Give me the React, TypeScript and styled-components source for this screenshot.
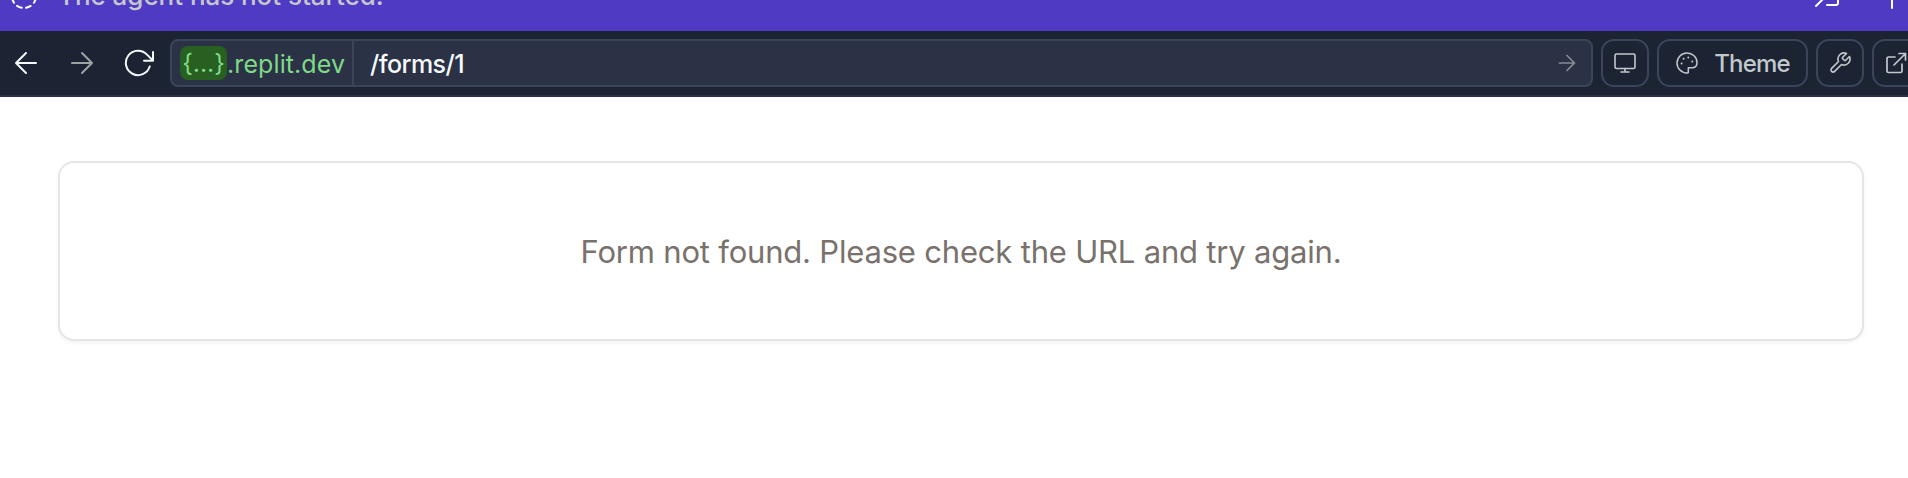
import React from "react";
import styled, { createGlobalStyle } from "styled-components";

const GlobalStyle = createGlobalStyle`
  * { box-sizing: border-box; }
  html, body { margin: 0; height: 100%; overflow: hidden; background: #ffffff; }
  #root { height: 100%; }
  body { font-family: Inter, "Liberation Sans", sans-serif; }
`;

const Page = styled.div`
  display: flex;
  flex-direction: column;
  width: 100%;
  height: 100%;
  overflow: hidden;
`;

const Banner = styled.header`
  display: flex;
  align-items: flex-end;
  flex: none;
  height: 31px;
  overflow: hidden;
  background: #4f3ac4;
`;

const BannerRow = styled.div`
  display: flex;
  align-items: center;
  flex: none;
  width: 100%;
  height: 70px;
  padding: 0 0 0 8px;
  color: #ffffff;
`;

const BannerText = styled.span`
  flex: 1;
  margin-left: 18px;
  font-family: Inter, sans-serif;
  font-size: 26px;
  font-weight: 500;
  line-height: 36px;
  letter-spacing: -0.05px;
  color: #c5c8cc;
  white-space: nowrap;
`;

const BannerActions = styled.div`
  display: flex;
  gap: 32px;
`;

const Toolbar = styled.nav`
  display: flex;
  align-items: center;
  flex: none;
  height: 66px;
  padding-left: 10px;
  border-bottom: 2px solid #2b3044;
  background: #1c2333;
`;

const NavGroup = styled.div`
  display: flex;
  gap: 24px;
  margin-right: 16px;
`;

const IconButton = styled.button<{ $color: string }>`
  display: flex;
  width: 32px;
  height: 32px;
  padding: 0;
  border: 0;
  background: none;
  color: ${(p) => p.$color};
`;

const AddressBar = styled.div`
  display: flex;
  align-items: stretch;
  flex: none;
  width: 1423px;
  height: 48px;
  border: 2px solid #3c445c;
  border-radius: 8px;
  background: #2b3245;
  font-size: 25px;
  font-weight: 500;
  line-height: 46px;
  white-space: nowrap;
`;

const Host = styled.div`
  display: flex;
  align-items: center;
  width: 182px;
  padding-left: 8px;
  border-right: 2px solid #3c445c;
  color: #7fd987;
  font-weight: 400;
`;

const HostTag = styled.span`
  display: flex;
  justify-content: center;
  flex: none;
  width: 47px;
  height: 34px;
  border-radius: 8px;
  background: #276021;
  line-height: 35px;
  letter-spacing: -0.1px;
`;

const Domain = styled.span`
  padding-top: 2px;
  letter-spacing: 0.1px;
`;

const PathText = styled.span`
  flex: 1;
  padding-left: 16px;
  color: #f5f9fc;
  letter-spacing: -0.55px;
`;

const GoButton = styled(IconButton)`
  align-self: center;
  margin-right: 8px;
`;

const ToolGroup = styled.div`
  display: flex;
  flex: none;
  gap: 8px;
  margin-left: 8px;
`;

const ToolButton = styled.button<{ $width?: number }>`
  display: flex;
  align-items: center;
  justify-content: center;
  flex: none;
  gap: 15px;
  width: ${(p) => p.$width ?? 48}px;
  height: 48px;
  padding: 0;
  border: 2px solid #3c445c;
  border-radius: 13px;
  background: transparent;
  color: #c2c8cc;
  font-family: Inter, sans-serif;
  font-size: 24px;
  font-weight: 500;
  line-height: 46px;
  letter-spacing: -0.8px;
`;

const ToolLabel = styled.span`
  padding-top: 2px;
`;

const Content = styled.main`
  flex: 1;
  padding: 64px 44px 0 58px;
  background: #ffffff;
`;

const Card = styled.section`
  display: flex;
  align-items: center;
  justify-content: center;
  height: 180px;
  border: 2px solid #e5e5e5;
  border-radius: 16px;
  background: #ffffff;
  box-shadow: 0 2px 4px rgba(0, 0, 0, 0.05);
`;

const Message = styled.p`
  margin: 0;
  padding-top: 2px;
  font-size: 31px;
  line-height: 48px;
  letter-spacing: -0.19px;
  color: #78716c;
  white-space: nowrap;
`;

const Icon = styled.svg<{ $stroke?: number }>`
  display: block;
  flex: none;
  fill: none;
  stroke: currentColor;
  stroke-width: ${(p) => p.$stroke ?? 2};
  stroke-linecap: round;
  stroke-linejoin: round;
`;

const ArrowIcon = ({ back = false }: { back?: boolean }) => (
  <Icon width="32" height="32" viewBox="0 0 32 32">
    <path d={back ? "M26 16H6M16 6 6 16l10 10" : "M6 16h20M16 6l10 10-10 10"} />
  </Icon>
);

export default function App() {
  return (
    <Page>
      <GlobalStyle />
      <Banner>
        <BannerRow>
          <Icon width="32" height="32" viewBox="0 0 32 32">
            <circle cx="16" cy="16" r="12" strokeDasharray="5 4.42" strokeDashoffset="-2.2" />
          </Icon>
          <BannerText>The agent has not started.</BannerText>
          <BannerActions>
            <Icon width="32" height="32" viewBox="0 0 32 32">
              <path d="M4 26 15 15M15 25h9a2 2 0 0 0 2-2V8" />
            </Icon>
            <Icon width="32" height="32" viewBox="0 0 32 32">
              <path d="M16 4v24M4 16h24" />
            </Icon>
          </BannerActions>
        </BannerRow>
      </Banner>
      <Toolbar>
        <NavGroup>
          <IconButton $color="#f5f9fc" aria-label="Back">
            <ArrowIcon back />
          </IconButton>
          <IconButton $color="#9da2a6" aria-label="Forward">
            <ArrowIcon />
          </IconButton>
          <IconButton $color="#f5f9fc" aria-label="Reload">
            <Icon width="32" height="32" viewBox="0 0 32 32">
              <path d="M27.7 19.5A12.2 12.2 0 1 1 25 7.6l5.8 5.8M31 5v8.7h-9" />
            </Icon>
          </IconButton>
        </NavGroup>
        <AddressBar>
          <Host>
            <HostTag>{"{...}"}</HostTag>
            <Domain>.replit.dev</Domain>
          </Host>
          <PathText>/forms/1</PathText>
          <GoButton $color="#858b95" aria-label="Go">
            <Icon $stroke={1.7} width="32" height="32" viewBox="0 0 32 32">
              <path d="M8.5 16h15M16 8.5l7.5 7.5-7.5 7.5" />
            </Icon>
          </GoButton>
        </AddressBar>
        <ToolGroup>
          <ToolButton aria-label="Device">
            <Icon $stroke={1.6} width="24" height="24" viewBox="0 0 24 24">
              <rect x="2" y="3" width="20" height="14.5" rx="1.5" />
              <path d="M12 17.5V21M8 21h8" />
            </Icon>
          </ToolButton>
          <ToolButton $width={151}>
            <Icon $stroke={1.5} width="24" height="24" viewBox="0 0 24 24">
              <path d="M12 2a10 10 0 0 0 0 20c1.2 0 1.6-.8 1.3-1.8v-3.4h4.5C20.5 16.5 22 14 22 11.5 22 6.2 17.5 2 12 2Z" />
              <g fill="currentColor" stroke="none">
                <circle cx="6.6" cy="12.5" r="1" />
                <circle cx="8.6" cy="7.8" r="1" />
                <circle cx="13.3" cy="6.6" r="1" />
                <circle cx="17.3" cy="10.5" r="1" />
              </g>
            </Icon>
            <ToolLabel>Theme</ToolLabel>
          </ToolButton>
          <ToolButton aria-label="Tools">
            <Icon $stroke={1.6} width="24" height="24" viewBox="0 0 24 24">
              <path d="M14.7 6.3a1 1 0 0 0 0 1.4l1.6 1.6a1 1 0 0 0 1.4 0l3.77-3.77a6 6 0 0 1-7.94 7.94l-6.91 6.91a2.12 2.12 0 0 1-3-3l6.91-6.91a6 6 0 0 1 7.94-7.94l-3.76 3.76z" />
            </Icon>
          </ToolButton>
          <ToolButton aria-label="Open in new tab">
            <Icon $stroke={1.7} width="24" height="24" viewBox="0 0 24 24">
              <path d="M18 13v7a1.5 1.5 0 0 1-1.5 1.5h-12A1.5 1.5 0 0 1 3 20V7.5A1.5 1.5 0 0 1 4.5 6H11M15 2.5h6.5V9M10 14 21.5 2.5" />
            </Icon>
          </ToolButton>
        </ToolGroup>
      </Toolbar>
      <Content>
        <Card>
          <Message>Form not found. Please check the URL and try again.</Message>
        </Card>
      </Content>
    </Page>
  );
}
